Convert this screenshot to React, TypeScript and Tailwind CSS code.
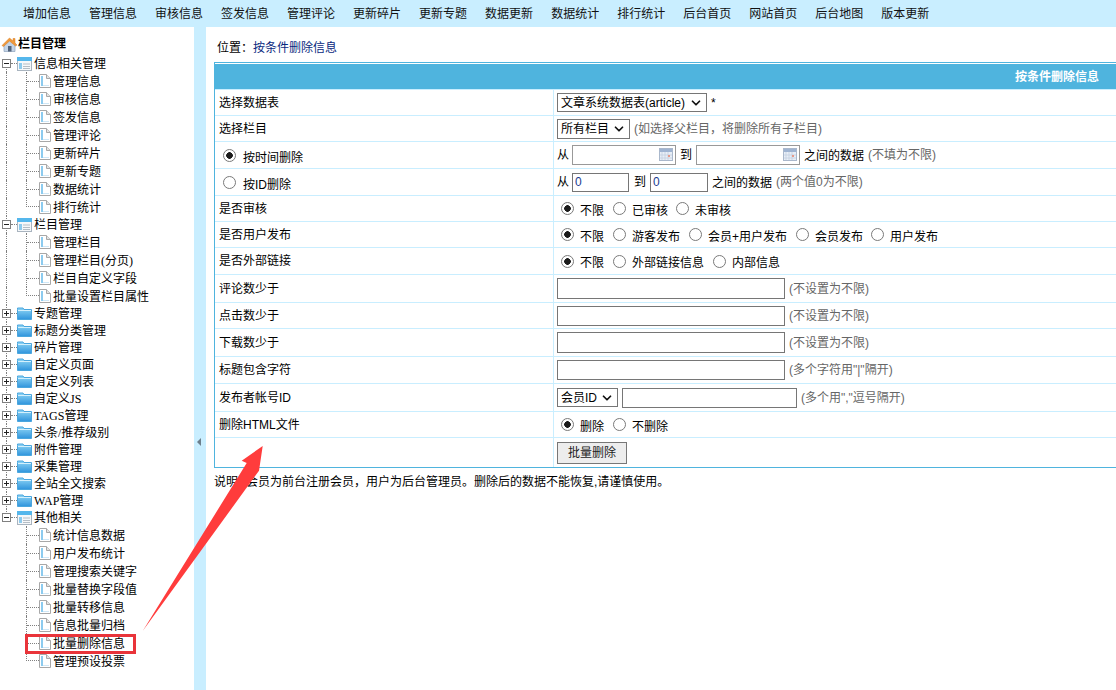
import { ChevronDown } from "lucide-react";

const navItems = ["增加信息", "管理信息", "审核信息", "签发信息", "管理评论", "更新碎片", "更新专题", "数据更新", "数据统计", "排行统计", "后台首页", "网站首页", "后台地图", "版本更新"];

const sansFont = "font-['Liberation_Sans','Noto_Sans_CJK_SC',sans-serif]";
const serifFont = "font-['Liberation_Serif','Noto_Sans_CJK_SC',serif]";

function HomeIcon() {
  return (
    <svg width="17" height="17" viewBox="0 0 17 17" className="shrink-0">
      <path d="M3 8.5 L3 15.5 L14 15.5 L14 7.5 L9 3.5 Z" fill="#c3d3e6" stroke="#8ea3bd" strokeWidth="0.7" />
      <path d="M1 9.5 L8.5 2 L12 5 L12 2.5 L14 2.5 L14 7 L16 9 L14.5 10 L8.5 5 L2.5 10.5 Z" fill="#f09a3c" stroke="#d97a1f" strokeWidth="0.5" />
      <rect x="7" y="10" width="3.5" height="5.5" fill="#52637a" />
    </svg>
  );
}

function FolderIcon() {
  return (
    <svg width="15" height="13" viewBox="0 0 15 13" className="shrink-0">
      <defs>
        <linearGradient id="folderBody" x1="0" y1="0" x2="0" y2="1">
          <stop offset="0" stopColor="#8fd6f6" />
          <stop offset="1" stopColor="#2f94dc" />
        </linearGradient>
      </defs>
      <path d="M0.5 2.5 L0.5 1 L6 1 L7 2.5 L14.5 2.5 L14.5 12.5 L0.5 12.5 Z" fill="url(#folderBody)" stroke="#4aa6de" />
      <rect x="1" y="3" width="13" height="1" fill="#d4f0fc" />
    </svg>
  );
}

function SectionIcon() {
  return (
    <svg width="15" height="14" viewBox="0 0 15 14" className="shrink-0">
      <rect x="0.5" y="0.5" width="14" height="13" fill="#f6f8fa" stroke="#a9b4bf" />
      <rect x="0" y="0" width="15" height="4" fill="#55b7ec" />
      <rect x="2" y="6" width="3" height="6" fill="#8ecbee" />
      <rect x="6" y="6.5" width="7" height="1" fill="#b5bdc5" />
      <rect x="6" y="9" width="7" height="1" fill="#b5bdc5" />
      <rect x="6" y="11" width="7" height="1" fill="#b5bdc5" />
    </svg>
  );
}

function PageIcon() {
  return (
    <svg width="12" height="14" viewBox="0 0 12 14" className="shrink-0">
      <path d="M0.5 0.5 L7.5 0.5 L11.5 4.5 L11.5 13.5 L0.5 13.5 Z" fill="#fff" stroke="#a8a8a8" />
      <path d="M7.5 0.5 L7.5 4.5 L11.5 4.5" fill="#e4e4e4" stroke="#a8a8a8" />
      <rect x="2" y="2" width="2" height="10" fill="#8ccbef" />
      <rect x="4" y="11" width="6" height="1" fill="#cfe7f6" />
    </svg>
  );
}

function ExpandBox({ open }: { open: boolean }) {
  return (
    <span className="relative z-10 flex h-[9px] w-[9px] shrink-0 items-center justify-center border border-[#808080] bg-white">
      <span className="h-px w-[5px] bg-[#222]" />
      {!open && <span className="absolute h-[5px] w-px bg-[#222]" />}
    </span>
  );
}

function SectionRow({ label, open, first, last }: { label: string; open?: boolean; first?: boolean; last?: boolean }) {
  return (
    <div className="flex h-[17px] items-center pl-[2px]">
      <span className="relative flex w-[15px] shrink-0 items-center self-stretch">
        <span className={first ? "absolute bottom-0 left-[4px] top-1/2 border-l border-dotted border-[#808080]" : last ? "absolute bottom-1/2 left-[4px] top-0 border-l border-dotted border-[#808080]" : "absolute bottom-0 left-[4px] top-0 border-l border-dotted border-[#808080]"} />
        <ExpandBox open={!!open} />
        <span className="w-[6px] border-t border-dotted border-[#808080]" />
      </span>
      {open ? <SectionIcon /> : <FolderIcon />}
      <span className="ml-[2px] whitespace-nowrap">{label}</span>
    </div>
  );
}

function LeafRow({ label, last, outer = true }: { label: string; last?: boolean; outer?: boolean }) {
  return (
    <div className="flex h-[18px] items-center">
      <span className="ml-[6px] w-[20px] shrink-0 self-stretch">
        {outer && <span className="block h-full w-0 border-l border-dotted border-[#808080]" />}
      </span>
      {last ? (
        <span className="h-[9px] w-[13px] shrink-0 self-start border-b border-l border-dotted border-[#808080]" />
      ) : (
        <span className="flex w-[13px] shrink-0 items-center self-stretch border-l border-dotted border-[#808080]">
          <span className="w-full border-t border-dotted border-[#808080]" />
        </span>
      )}
      <PageIcon />
      <span className="ml-[2px] translate-y-[1px] whitespace-nowrap">{label}</span>
    </div>
  );
}

function Leaves({ items, outer = true }: { items: string[]; outer?: boolean }) {
  return (
    <>
      {items.map((item, i) => (
        <LeafRow key={item} label={item} last={i === items.length - 1} outer={outer} />
      ))}
    </>
  );
}

function Sidebar() {
  return (
    <aside className={`w-[194px] shrink-0 pt-[8px] text-[12px] leading-[18px] text-black ${serifFont}`}>
      <div className="mb-[2px] flex h-[18px] items-center pl-[1px] font-bold">
        <HomeIcon />
        <span>栏目管理</span>
      </div>
      <SectionRow label="信息相关管理" open first />
      <Leaves items={["管理信息", "审核信息", "签发信息", "管理评论", "更新碎片", "更新专题", "数据统计", "排行统计"]} />
      <SectionRow label="栏目管理" open />
      <Leaves items={["管理栏目", "管理栏目(分页)", "栏目自定义字段", "批量设置栏目属性"]} />
      {["专题管理", "标题分类管理", "碎片管理", "自定义页面", "自定义列表", "自定义JS", "TAGS管理", "头条/推荐级别", "附件管理", "采集管理", "全站全文搜索", "WAP管理"].map((item) => (
        <SectionRow key={item} label={item} />
      ))}
      <SectionRow label="其他相关" open last />
      <Leaves outer={false} items={["统计信息数据", "用户发布统计", "管理搜索关键字", "批量替换字段值", "批量转移信息", "信息批量归档", "批量删除信息", "管理预设投票"]} />
    </aside>
  );
}

function Radio({ label, checked, name, gap = "ml-[9px]" }: { label: string; checked?: boolean; name: string; gap?: string }) {
  return (
    <label className={`flex items-center ${gap}`}>
      <input
        type="radio"
        name={name}
        defaultChecked={checked}
        className="h-[13px] w-[13px] appearance-none rounded-full border border-[#7a7a7a] bg-white checked:bg-[radial-gradient(circle,#1c1c1c_0,#1c1c1c_3px,#ffffff_3.6px)]"
      />
      <span className="ml-[6px] translate-y-[2px] whitespace-nowrap">{label}</span>
    </label>
  );
}

function Select({ value, width, height = "h-[19px]" }: { value: string; width: string; height?: string }) {
  return (
    <span className={`relative flex shrink-0 items-center border border-[#767676] bg-white pl-[3px] ${width} ${height}`}>
      <span className="whitespace-nowrap">{value}</span>
      <ChevronDown className="pointer-events-none absolute right-[3px] top-[2px] h-[14px] w-[14px] text-[#111]" strokeWidth={3} />
    </span>
  );
}

function CalendarInput() {
  return (
    <span className="relative flex h-[20px] w-[104px] shrink-0 items-center border border-[#999] bg-white">
      <input type="text" className="h-full w-full bg-transparent outline-none" />
      <svg width="14" height="13" viewBox="0 0 14 13" className="absolute right-[2px] top-[2px]">
        <rect x="0.5" y="0.5" width="13" height="12" fill="#e8eef7" stroke="#aab8cc" />
        <rect x="1" y="1" width="12" height="3" fill="#9fb4d2" />
        <path d="M3 4v8M6 4v8M9 4v8M1 7h12M1 10h12" stroke="#c3cfe0" strokeWidth="0.8" />
        <rect x="9" y="7" width="2" height="2" fill="#e59a8a" />
      </svg>
    </span>
  );
}

function TextInput({ value, width, height = "h-[20px]", extra = "" }: { value?: string; width: string; height?: string; extra?: string }) {
  return (
    <input
      type="text"
      defaultValue={value}
      className={`shrink-0 border border-[#767676] bg-white px-[2px] text-[#1a3c8f] outline-none ${width} ${height} ${extra}`}
    />
  );
}

function Hint({ children }: { children: string }) {
  return <span className="ml-[4px] whitespace-nowrap text-[#666]">{children}</span>;
}

function Row({ label, height, last, children }: { label: React.ReactNode; height: string; last?: boolean; children: React.ReactNode }) {
  return (
    <div className={`grid grid-cols-[339px_1fr] ${height} ${last ? "" : "border-b border-[#c9eeff]"}`}>
      <div className="flex items-center border-r border-[#c9eeff] pl-[4px]">{label}</div>
      <div className="flex items-center pl-[3px]">{children}</div>
    </div>
  );
}

function ModeLabel({ label, checked }: { label: string; checked?: boolean }) {
  return (
    <label className="ml-[4px] flex items-center">
      <input
        type="radio"
        name="mode"
        defaultChecked={checked}
        className="h-[13px] w-[13px] appearance-none rounded-full border border-[#7a7a7a] bg-white checked:bg-[radial-gradient(circle,#1c1c1c_0,#1c1c1c_3px,#ffffff_3.6px)]"
      />
      <span className="ml-[7px] translate-y-[3px] whitespace-nowrap">{label}</span>
    </label>
  );
}

function FormTable() {
  return (
    <div className="w-[920px] border border-[#4fb4de]">
      <div className="flex h-[27px] items-center justify-end border-b border-t border-b-[#c9eeff] border-t-white bg-[#4fb4de] pr-[34px] font-bold text-white">
        按条件删除信息
      </div>
      <Row label="选择数据表" height="h-[26px]">
        <Select value="文章系统数据表(article)" width="w-[150px]" />
        <span className="ml-[4px]">*</span>
      </Row>
      <Row label="选择栏目" height="h-[26px]">
        <Select value="所有栏目" width="w-[73px]" height="h-[20px]" />
        <Hint>(如选择父栏目，将删除所有子栏目)</Hint>
      </Row>
      <Row label={<ModeLabel label="按时间删除" checked />} height="h-[27px]">
        <span className="mr-[3px]">从</span>
        <CalendarInput />
        <span className="mx-[4px] w-[12px]">到</span>
        <CalendarInput />
        <span className="ml-[4px] translate-y-[1px] whitespace-nowrap">之间的数据</span>
        <Hint>(不填为不限)</Hint>
      </Row>
      <Row label={<ModeLabel label="按ID删除" />} height="h-[27px]">
        <span className="mr-[3px]">从</span>
        <TextInput value="0" width="w-[57px]" height="h-[19px]" />
        <span className="ml-[5px] mr-[4px] w-[12px]">到</span>
        <TextInput value="0" width="w-[58px]" height="h-[19px]" />
        <span className="ml-[4px] translate-y-[1px] whitespace-nowrap">之间的数据</span>
        <Hint>(两个值0为不限)</Hint>
      </Row>
      <Row label="是否审核" height="h-[26px]">
        <Radio name="check" label="不限" checked gap="ml-[4px]" />
        <Radio name="check" label="已审核" />
        <Radio name="check" label="未审核" gap="ml-[8px]" />
      </Row>
      <Row label="是否用户发布" height="h-[26px]">
        <Radio name="publish" label="不限" checked gap="ml-[4px]" />
        <Radio name="publish" label="游客发布" />
        <Radio name="publish" label="会员+用户发布" />
        <Radio name="publish" label="会员发布" />
        <Radio name="publish" label="用户发布" gap="ml-[8px]" />
      </Row>
      <Row label="是否外部链接" height="h-[27px]">
        <Radio name="link" label="不限" checked gap="ml-[4px]" />
        <Radio name="link" label="外部链接信息" />
        <Radio name="link" label="内部信息" />
      </Row>
      <Row label="评论数少于" height="h-[28px]">
        <TextInput width="w-[228px]" height="h-[21px]" />
        <Hint>(不设置为不限)</Hint>
      </Row>
      <Row label="点击数少于" height="h-[26px]">
        <TextInput width="w-[228px]" />
        <Hint>(不设置为不限)</Hint>
      </Row>
      <Row label="下载数少于" height="h-[28px]">
        <TextInput width="w-[228px]" height="h-[21px]" />
        <Hint>(不设置为不限)</Hint>
      </Row>
      <Row label="标题包含字符" height="h-[27px]">
        <TextInput width="w-[228px]" />
        <Hint>(多个字符用"|"隔开)</Hint>
      </Row>
      <Row label="发布者帐号ID" height="h-[28px]">
        <Select value="会员ID" width="w-[61px]" />
        <TextInput width="w-[175px]" extra="ml-[4px]" />
        <Hint>(多个用","逗号隔开)</Hint>
      </Row>
      <Row label="删除HTML文件" height="h-[26px]">
        <Radio name="html" label="删除" checked gap="ml-[4px]" />
        <Radio name="html" label="不删除" />
      </Row>
      <Row label="" height="h-[29px]" last>
        <button type="button" className="h-[22px] w-[70px] border border-[#777] bg-[#ededed] text-[#222]">
          批量删除
        </button>
      </Row>
    </div>
  );
}

export default function App() {
  return (
    <div className={`relative h-[690px] w-[1116px] overflow-hidden bg-white text-[12px] leading-[18px] text-black ${sansFont}`}>
      <nav className="flex h-[27px] items-center gap-[18px] bg-[#c9eeff] pl-[23px]">
        {navItems.map((item) => (
          <a key={item} href="#" className="whitespace-nowrap text-[#111]">
            {item}
          </a>
        ))}
      </nav>
      <div className="flex h-[663px]">
        <Sidebar />
        <div className="w-[12px] shrink-0 bg-[#c9eeff] pl-[3px] pt-[411px]">
          <span className="block h-0 w-0 border-b-[4px] border-r-[4px] border-t-[4px] border-b-transparent border-r-[#6d7f8c] border-t-transparent" />
        </div>
        <main className="min-w-0 flex-1 pl-[8px]">
          <div className="mb-[5px] mt-[12px] flex h-[18px] items-center pl-[3px]">
            <span>位置：</span>
            <a href="#" className="text-[#0a2a80]">按条件删除信息</a>
          </div>
          <FormTable />
          <p className="mt-[5px] whitespace-nowrap">
            说明<span className="inline-block w-[8px]">:</span>会员为前台注册会员，用户为后台管理员。删除后的数据不能恢复,请谨慎使用。
          </p>
        </main>
      </div>

      {/* red annotation laid over the screenshot */}
      <div className="pointer-events-none absolute left-[25px] top-[634px] h-[20px] w-[111px] border-[3px] border-[#e9343a]" />
      <svg width="1116" height="690" className="pointer-events-none absolute left-0 top-0">
        <polygon points="142.7,631 246.7,463 241.7,460.7 262.7,446 259,470.7" fill="#ff3c3c" />
      </svg>
    </div>
  );
}
